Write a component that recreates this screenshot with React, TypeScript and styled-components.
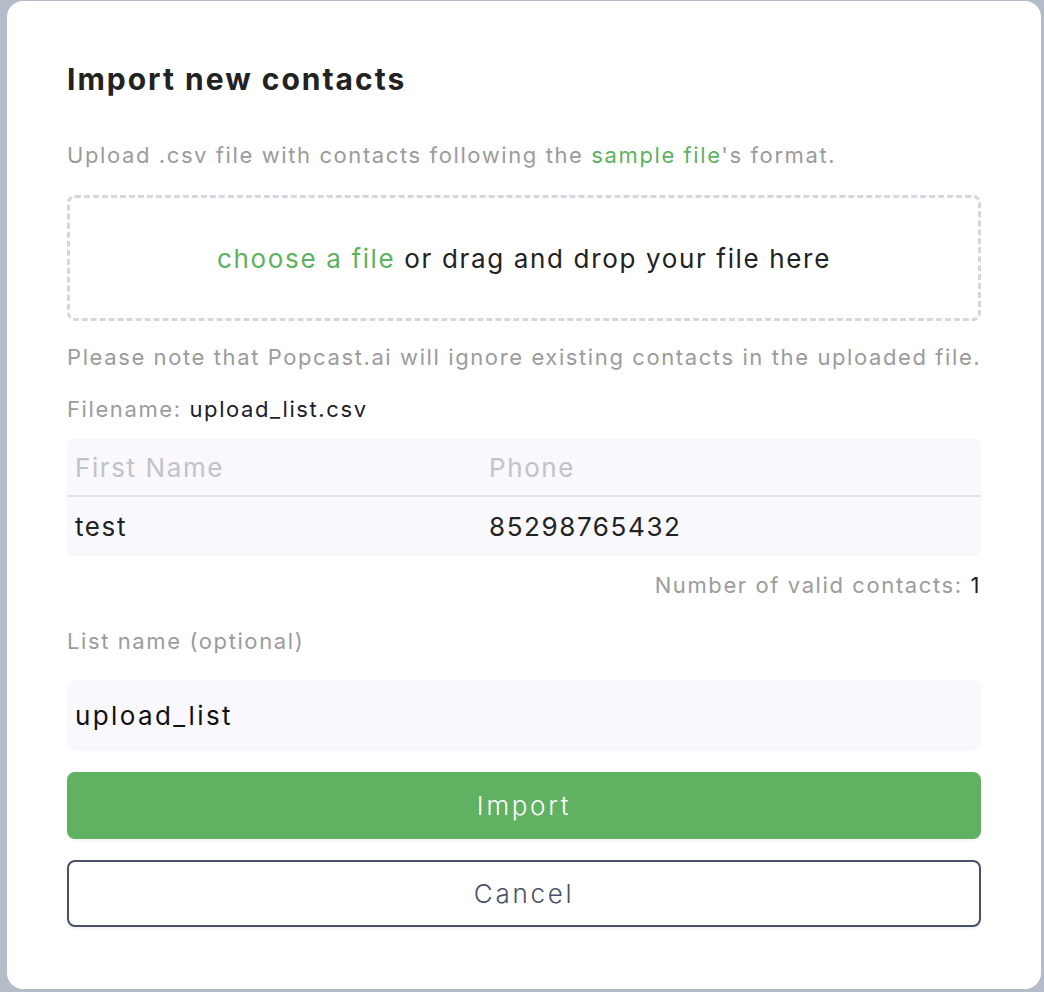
import React from "react";
import styled, { createGlobalStyle } from "styled-components";

const Global = createGlobalStyle`
  html, body { margin: 0; padding: 0; }
  body {
    background: #b5bcc9;
    font-family: Inter, "Noto Sans", sans-serif;
  }
`;

const Backdrop = styled.div`
  width: 1044px;
  height: 992px;
  box-sizing: border-box;
  padding: 1px 3px 3px 7px;
  background: #b5bcc9;
`;

const Modal = styled.div`
  box-sizing: border-box;
  width: 1034px;
  height: 988px;
  background: #ffffff;
  border-radius: 16px;
  padding: 58px 60px 0;
  display: flex;
  flex-direction: column;
`;

const Title = styled.h1`
  margin: 0;
  font-size: 30px;
  line-height: 40px;
  font-weight: 700;
  letter-spacing: 2px;
  color: #222222;
`;

const Text = styled.p<{ $mt: number; $align?: string }>`
  margin: ${(p) => p.$mt}px 0 0;
  font-size: 22px;
  line-height: 28px;
  letter-spacing: 1.6px;
  white-space: nowrap;
  color: #9b9b9b;
  text-align: ${(p) => p.$align || "left"};
`;

const Link = styled.span`
  color: #5cb35e;
`;

const Dark = styled.span`
  color: #1c1c2a;
`;

const Dropzone = styled.div`
  margin-top: 26px;
  height: 126px;
  box-sizing: border-box;
  border: 3px dashed #d3d8e0;
  border-radius: 8px;
  display: flex;
  align-items: center;
  justify-content: center;
  font-size: 26px;
  letter-spacing: 1.65px;
  color: #222222;
`;

const Table = styled.div`
  margin-top: 16px;
  background: #f8f8fd;
  border-radius: 8px;
  display: grid;
  grid-template-columns: 414px 1fr;
`;

const Cell = styled.div<{ $head?: boolean }>`
  height: ${(p) => (p.$head ? 58 : 59)}px;
  box-sizing: border-box;
  padding: 0 8px;
  display: flex;
  align-items: center;
  font-size: 26px;
  letter-spacing: 1.6px;
  color: ${(p) => (p.$head ? "#c2c2ca" : "#222222")};
  border-bottom: ${(p) => (p.$head ? "2px solid #e1e1ea" : "none")};
`;

const Input = styled.div`
  margin-top: 25px;
  height: 71px;
  box-sizing: border-box;
  background: #f8f8fd;
  border-radius: 8px;
  padding: 0 8px;
  display: flex;
  align-items: center;
  font-size: 26px;
  letter-spacing: 2.4px;
  color: #111111;
`;

const Button = styled.button<{ $primary?: boolean; $mt: number }>`
  margin-top: ${(p) => p.$mt}px;
  height: 67px;
  width: 100%;
  box-sizing: border-box;
  border-radius: 8px;
  font-family: inherit;
  font-size: 26px;
  letter-spacing: 2.7px;
  font-weight: 300;
  cursor: pointer;
  background: ${(p) => (p.$primary ? "#60b162" : "#ffffff")};
  color: ${(p) => (p.$primary ? "#ffffff" : "#4a5068")};
  border: ${(p) => (p.$primary ? "none" : "2px solid #4a5068")};
  box-shadow: 0 2px 4px rgba(0, 0, 0, 0.06);
`;

export default function App() {
  return (
    <Backdrop>
      <Global />
      <Modal>
        <Title>Import new contacts</Title>
        <Text $mt={42}>
          Upload .csv file with contacts following the <Link>sample file</Link>'s format.
        </Text>
        <Dropzone>
          <Link>choose a file</Link>&nbsp;or drag and drop your file here
        </Dropzone>
        <Text $mt={22}>
          Please note that Popcast.ai will ignore existing contacts in the uploaded file.
        </Text>
        <Text $mt={24}>
          Filename: <Dark>upload_list.csv</Dark>
        </Text>
        <Table>
          <Cell $head>First Name</Cell>
          <Cell $head>Phone</Cell>
          <Cell>test</Cell>
          <Cell>85298765432</Cell>
        </Table>
        <Text $mt={15} $align="right">
          Number of valid contacts: <Dark>1</Dark>
        </Text>
        <Text $mt={28}>List name (optional)</Text>
        <Input>upload_list</Input>
        <Button $primary $mt={21}>Import</Button>
        <Button $mt={21}>Cancel</Button>
      </Modal>
    </Backdrop>
  );
}
